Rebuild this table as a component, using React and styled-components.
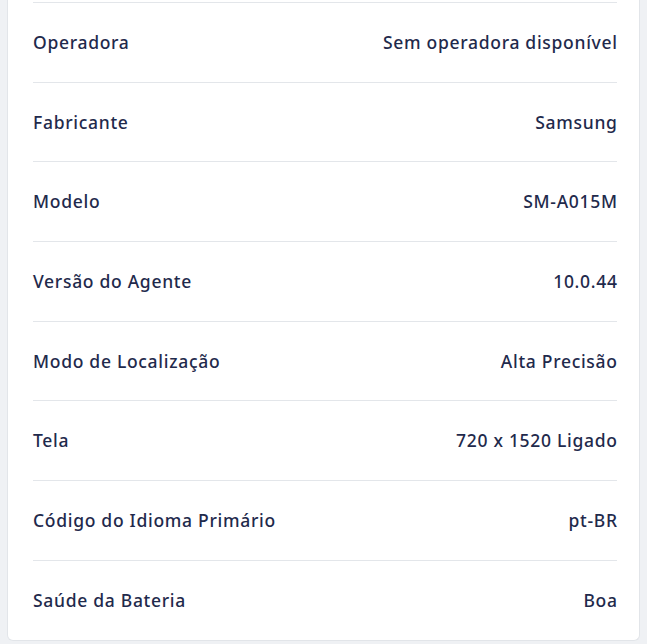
import React from "react";
import styled, { createGlobalStyle } from "styled-components";

const Global = createGlobalStyle`
  html, body {
    margin: 0;
    padding: 0;
    background: #eff1f4;
    font-family: "Noto Sans", "Open Sans", sans-serif;
  }
`;

const Page = styled.div`
  padding: 0 7px 5px 7px;
  height: 644px;
  box-sizing: border-box;
  overflow: hidden;
`;

const Card = styled.div`
  background: #ffffff;
  border: 1px solid #e2e5e9;
  border-top: none;
  border-radius: 0 0 6px 6px;
  padding: 2px 22px 0 25px;
`;

const Row = styled.div`
  display: flex;
  align-items: center;
  justify-content: space-between;
  height: 79.7px;
  box-sizing: border-box;
  border-top: 1px solid #e3e6ea;
  font-size: 17.5px;
  font-weight: 500;
  letter-spacing: 0.7px;
  color: #1f2a4c;
  padding-bottom: 1px;
`;

const Label = styled.span``;
const Value = styled.span`
  text-align: right;
  margin-right: -0.7px;
`;

const rows = [
  ["Operadora", "Sem operadora disponível"],
  ["Fabricante", "Samsung"],
  ["Modelo", "SM-A015M"],
  ["Versão do Agente", "10.0.44"],
  ["Modo de Localização", "Alta Precisão"],
  ["Tela", "720 x 1520 Ligado"],
  ["Código do Idioma Primário", "pt-BR"],
  ["Saúde da Bateria", "Boa"],
];

export default function App() {
  return (
    <>
      <Global />
      <Page>
        <Card>
          {rows.map(([k, v]) => (
            <Row key={k}>
              <Label>{k}</Label>
              <Value>{v}</Value>
            </Row>
          ))}
        </Card>
      </Page>
    </>
  );
}
